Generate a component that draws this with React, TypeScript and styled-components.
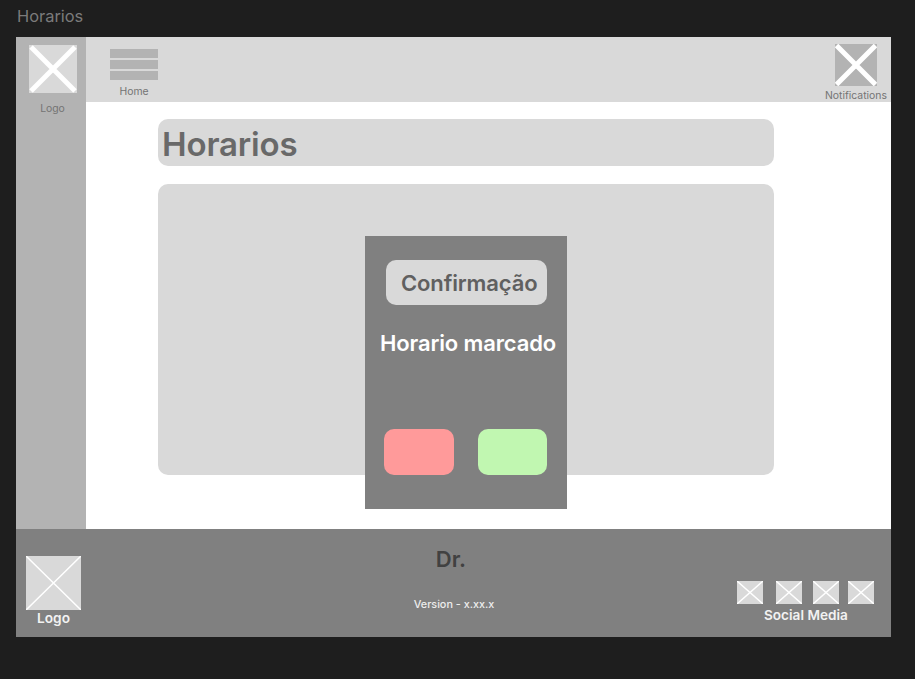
import React from "react";
import styled, { createGlobalStyle } from "styled-components";

const GlobalStyle = createGlobalStyle`
  * { box-sizing: border-box; }
  body { margin: 0; background: #1e1e1e; font-family: Inter, sans-serif; }
`;

const Canvas = styled.div`
  width: 915px;
  height: 679px;
  overflow: hidden;
  background: #1e1e1e;
`;

const FrameLabel = styled.div`
  height: 37px;
  padding: 6px 0 0 17px;
  font-size: 16.4px;
  line-height: 20px;
  color: #7b7b7b;
`;

const Frame = styled.div`
  position: relative;
  width: 875px;
  height: 600px;
  margin-left: 16px;
  display: grid;
  grid-template-columns: 70px 1fr;
  grid-template-rows: 65px 427px 108px;
  background: #fff;
`;

const Sidebar = styled.aside`
  grid-row: 1 / 3;
  padding: 8px 0 0 3px;
  display: flex;
  flex-direction: column;
  align-items: center;
  gap: 8px;
  background: #b3b3b3;
`;

const Header = styled.header`
  display: flex;
  justify-content: space-between;
  padding: 0 4px 0 24px;
  background: #d9d9d9;
`;

const HomeLink = styled.div`
  width: 48px;
  padding-top: 12px;
  display: flex;
  flex-direction: column;
  align-items: center;
`;

const MenuBars = styled.div`
  display: grid;
  gap: 2px;
  width: 48px;
  height: 31px;
  margin-bottom: 4px;
`;

const MenuBar = styled.span`
  background: #b3b3b3;
`;

const NotificationLink = styled.div`
  width: 62px;
  padding-top: 6.5px;
  display: flex;
  flex-direction: column;
  align-items: center;
  gap: 2.5px;
`;

const Caption = styled.span<{ $size?: number; $weight?: number; $color?: string }>`
  font-size: ${(p) => p.$size ?? 10.4}px;
  font-weight: ${(p) => p.$weight ?? 400};
  color: ${(p) => p.$color ?? "#747474"};
  line-height: 16px;
  white-space: nowrap;
`;

const Content = styled.main`
  padding: 16.5px 0 0 71.5px;
  display: flex;
  flex-direction: column;
  gap: 18px;
`;

const TitleBar = styled.h1`
  width: 616.5px;
  height: 47px;
  margin: 0;
  padding: 2px 0 0 4.5px;
  border-radius: 10px;
  background: #d9d9d9;
  color: #696969;
  font-size: 33px;
  font-weight: 600;
  letter-spacing: -0.15px;
  line-height: 46px;
`;

const Panel = styled.section`
  width: 616.5px;
  height: 291px;
  border-radius: 10px;
  background: #d9d9d9;
`;

const Dialog = styled.div`
  position: absolute;
  left: 349px;
  top: 199px;
  width: 202px;
  height: 273px;
  padding: 24px 20px 34px 19px;
  display: flex;
  flex-direction: column;
  background: #808080;
`;

const DialogTitle = styled.h2`
  width: 161px;
  height: 45px;
  margin: 0 0 0 2px;
  padding-left: 15px;
  border-radius: 10px;
  background: #d9d9d9;
  color: #606060;
  font-size: 22px;
  font-weight: 600;
  letter-spacing: -0.14px;
  line-height: 47px;
  white-space: nowrap;
`;

const DialogMessage = styled.p`
  margin: 23px -10px 0 -4px;
  color: #fff;
  font-size: 22px;
  font-weight: 600;
  letter-spacing: -0.14px;
  line-height: 30px;
  white-space: nowrap;
`;

const DialogActions = styled.div`
  display: flex;
  justify-content: space-between;
  margin-top: auto;
`;

const ActionButton = styled.button<{ $color: string; $width: number }>`
  width: ${(p) => p.$width}px;
  height: 46px;
  padding: 0;
  border: 0;
  border-radius: 10px;
  background: ${(p) => p.$color};
`;

const Footer = styled.footer`
  grid-column: 1 / 3;
  display: grid;
  grid-template-columns: 75px 1fr 157px;
  background: #808080;
`;

const FooterLogo = styled.div`
  padding: 27px 0 0 10px;
  width: 65px;
  display: flex;
  flex-direction: column;
  align-items: center;
`;

const FooterInfo = styled.div`
  display: flex;
  flex-direction: column;
  align-items: center;
  padding: 16px 0 0 83px;
`;

const Doctor = styled.div`
  width: 100%;
  padding-right: 6px;
  margin-bottom: 24px;
  text-align: center;
  color: #414141;
  font-size: 22px;
  font-weight: 600;
  line-height: 28px;
`;

const Social = styled.div`
  padding-top: 52px;
  display: flex;
  flex-direction: column;
`;

const SocialIcons = styled.div`
  display: grid;
  grid-template-columns: 39px 37px 35px 26px;
  margin-left: 3px;
  height: 23px;
  margin-bottom: 3px;
`;

const SocialLabel = styled.div`
  display: flex;
  padding-left: 30px;
`;

const Picture = styled.svg`
  display: block;
  flex: none;
`;

type PlaceholderProps = { width: number; height: number; stroke: number; inset?: number; fill?: string };

function Placeholder({ width, height, stroke, inset = 0, fill = "#d9d9d9" }: PlaceholderProps) {
  return (
    <Picture width={width} height={height} viewBox={`0 0 ${width} ${height}`}>
      <rect width={width} height={height} fill={fill} />
      <path
        d={`M${inset} ${inset}L${width - inset} ${height - inset}M${width - inset} ${inset}L${inset} ${height - inset}`}
        stroke="#fff"
        strokeWidth={stroke}
      />
    </Picture>
  );
}

export default function App() {
  return (
    <>
      <GlobalStyle />
      <Canvas>
        <FrameLabel>Horarios</FrameLabel>
        <Frame>
          <Sidebar>
            <Placeholder width={48} height={48} stroke={5} inset={2} />
            <Caption>Logo</Caption>
          </Sidebar>
          <Header>
            <HomeLink>
              <MenuBars>
                <MenuBar />
                <MenuBar />
                <MenuBar />
              </MenuBars>
              <Caption>Home</Caption>
            </HomeLink>
            <NotificationLink>
              <Placeholder width={42} height={42} stroke={5} inset={1.5} fill="#b3b3b3" />
              <Caption>Notifications</Caption>
            </NotificationLink>
          </Header>
          <Content>
            <TitleBar>Horarios</TitleBar>
            <Panel />
          </Content>
          <Footer>
            <FooterLogo>
              <Placeholder width={55} height={54} stroke={1.5} />
              <Caption $size={13.7} $weight={600} $color="#f2f2f2">Logo</Caption>
            </FooterLogo>
            <FooterInfo>
              <Doctor>Dr.</Doctor>
              <Caption $size={10.8} $weight={500} $color="#ededed">Version - x.xx.x</Caption>
            </FooterInfo>
            <Social>
              <SocialIcons>
                {[0, 1, 2, 3].map((i) => (
                  <Placeholder key={i} width={26} height={23} stroke={1.4} />
                ))}
              </SocialIcons>
              <SocialLabel>
                <Caption $size={13.6} $weight={600} $color="#f2f2f2">Social Media</Caption>
              </SocialLabel>
            </Social>
          </Footer>
          <Dialog role="dialog">
            <DialogTitle>Confirmação</DialogTitle>
            <DialogMessage>Horario marcado</DialogMessage>
            <DialogActions>
              <ActionButton $color="#ff9a9a" $width={70} aria-label="Cancelar" />
              <ActionButton $color="#c1f7b1" $width={69} aria-label="Confirmar" />
            </DialogActions>
          </Dialog>
        </Frame>
      </Canvas>
    </>
  );
}
